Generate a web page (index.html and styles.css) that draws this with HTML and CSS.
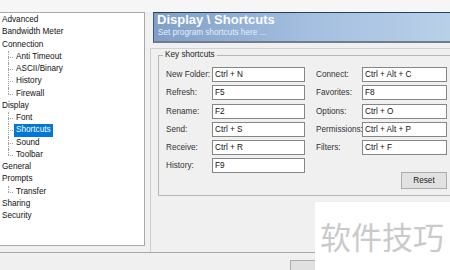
FILE: index.html
```html
<!doctype html>
<html lang="en">
<head>
    <meta charset="UTF-8" />
    <title>Options - Shortcuts</title>
    <link rel="stylesheet" href="styles.css">
</head>
<body>
    <div class="top"></div>
    <div class="main">
        <div class="tree">
            <ul class="nodes">
                <li><span class="node">Advanced</span></li>
                <li><span class="node">Bandwidth Meter</span></li>
                <li><span class="node">Connection</span>
                    <ul class="sub">
                        <li><span class="node">Anti Timeout</span></li>
                        <li><span class="node">ASCII/Binary</span></li>
                        <li><span class="node">History</span></li>
                        <li><span class="node">Firewall</span></li>
                    </ul>
                </li>
                <li><span class="node">Display</span>
                    <ul class="sub">
                        <li><span class="node">Font</span></li>
                        <li><span class="node selected">Shortcuts</span></li>
                        <li><span class="node">Sound</span></li>
                        <li><span class="node">Toolbar</span></li>
                    </ul>
                </li>
                <li><span class="node">General</span></li>
                <li><span class="node">Prompts</span>
                    <ul class="sub">
                        <li><span class="node">Transfer</span></li>
                    </ul>
                </li>
                <li><span class="node">Sharing</span></li>
                <li><span class="node">Security</span></li>
            </ul>
        </div>

        <div class="page">
            <div class="banner">
                <div class="title">Display \ Shortcuts</div>
                <div class="hint">Set program shortcuts here ...</div>
            </div>
            <div class="frame">
                <fieldset class="group">
                    <legend>Key shortcuts</legend>
                    <div class="keys">
                        <label>New Folder:</label><input type="text" value="Ctrl + N">
                        <label class="rlabel">Connect:</label><input type="text" value="Ctrl + Alt + C">
                        <label>Refresh:</label><input type="text" value="F5">
                        <label class="rlabel">Favorites:</label><input type="text" value="F8">
                        <label>Rename:</label><input type="text" value="F2">
                        <label class="rlabel">Options:</label><input type="text" value="Ctrl + O">
                        <label>Send:</label><input type="text" value="Ctrl + S">
                        <label class="rlabel">Permissions:</label><input type="text" value="Ctrl + Alt + P">
                        <label>Receive:</label><input type="text" value="Ctrl + R">
                        <label class="rlabel">Filters:</label><input type="text" value="Ctrl + F">
                        <label>History:</label><input type="text" value="F9">
                        <button class="reset">Reset</button>
                    </div>
                </fieldset>
            </div>
        </div>
    </div>

    <div class="footer">
        <button class="dlg-btn">Cancel</button>
    </div>

    <div class="watermark">软件技巧</div>
</body>
</html>
```

FILE: styles.css
```css
body {
    margin: 0;
    width: 450px;
    height: 270px;
    overflow: hidden;
    position: relative;
    background-color: #f0f0f0;
    font-family: "Liberation Sans", Arial, sans-serif;
    font-size: 8.2px;
    color: #111;
}

.top {
    height: 12px;
    background-color: #f6f6f6;
}

.main {
    display: flex;
    height: 240px;
}

/* Left tree */
.tree {
    width: 146px;
    height: 234px;
    margin-left: -1px;
    box-sizing: border-box;
    border: 1px solid #a9a9a9;
    background-color: #ffffff;
    padding: 1px 0 0 2px;
    flex-shrink: 0;
}

.nodes,
.sub {
    list-style: none;
    margin: 0;
    padding: 0;
}

.nodes li {
    line-height: 12.25px;
}

.node {
    display: inline-block;
    white-space: nowrap;
}

.sub {
    margin-left: 12px;
}

.sub li {
    position: relative;
}

.sub .node {
    padding: 0 2px;
}

.sub li::before {
    content: "";
    position: absolute;
    left: -6px;
    top: 6px;
    width: 5px;
    border-top: 1px dotted #a0a0a0;
}

.sub li::after {
    content: "";
    position: absolute;
    left: -6px;
    top: 0;
    height: 6px;
    border-left: 1px dotted #a0a0a0;
}

.sub li:not(:last-child)::after {
    height: 100%;
}

.selected {
    background-color: #0078d7;
    color: #ffffff;
}

/* Right page */
.page {
    margin-left: 5px;
    flex: 1;
    display: flex;
    flex-direction: column;
}

.banner {
    height: 31px;
    box-sizing: border-box;
    margin-left: 3px;
    border-top: 1px solid #22405f;
    border-left: 1px solid #3d5a7a;
    border-bottom: 2px solid #6f7d8d;
    background: linear-gradient(90deg, #809fc8 0%, #a4bfdf 50%, #bcd2ea 100%);
    padding: 0 0 0 3px;
}

.title {
    font-size: 13px;
    line-height: 14px;
    font-weight: bold;
    color: #fbfdff;
    white-space: nowrap;
}

.hint {
    margin-top: 1px;
    padding-left: 1px;
    line-height: 10px;
    color: #e6eef8;
    white-space: nowrap;
}

.frame {
    margin-top: 5px;
    flex: 1;
    border-top: 1px solid #d2d2d2;
    border-left: 1px solid #cdcdcd;
}

.group {
    width: 300px;
    margin: 1px 0 0 7px;
    padding: 7px 0 3px 7px;
    border: 1px solid #b6b6b6;
}

.group legend {
    margin-left: -3px;
    padding: 0 2px;
    line-height: 10px;
    color: #222;
}

.keys {
    display: grid;
    grid-template-columns: 46px 93px 57px 85px;
    grid-auto-rows: 15px;
    row-gap: 3.3px;
}

.keys label {
    line-height: 15px;
    white-space: nowrap;
    color: #333;
}

.keys .rlabel {
    padding-left: 11px;
}

.keys input {
    width: 100%;
    height: 15px;
    box-sizing: border-box;
    margin: 0;
    padding: 0 2px;
    border: 1px solid #868686;
    background-color: #ffffff;
    font-family: "Liberation Sans", Arial, sans-serif;
    font-size: 8.2px;
    color: #111;
    outline: none;
}

.reset {
    grid-row: 7;
    grid-column: 4;
    justify-self: end;
    width: 46px;
    height: 17px;
    margin-top: -5px;
    padding: 0;
    border: 1px solid #adadad;
    background-color: #e1e1e1;
    font-family: "Liberation Sans", Arial, sans-serif;
    font-size: 8.2px;
    color: #222;
}

/* Bottom */
.footer {
    border-top: 1px solid #a8a8a8;
    padding: 7px 0 0 290px;
}

.dlg-btn {
    width: 75px;
    height: 22px;
    padding: 0;
    border: 1px solid #adadad;
    background-color: #e1e1e1;
    font-family: "Liberation Sans", Arial, sans-serif;
    font-size: 8.2px;
    color: #222;
}

.watermark {
    position: absolute;
    left: 315px;
    top: 202px;
    width: 135px;
    height: 68px;
    box-sizing: border-box;
    padding-left: 5px;
    background-color: #ffffff;
    font-family: "Noto Sans CJK SC", sans-serif;
    font-size: 31px;
    line-height: 68px;
    color: #cacaca;
    white-space: nowrap;
}
```
